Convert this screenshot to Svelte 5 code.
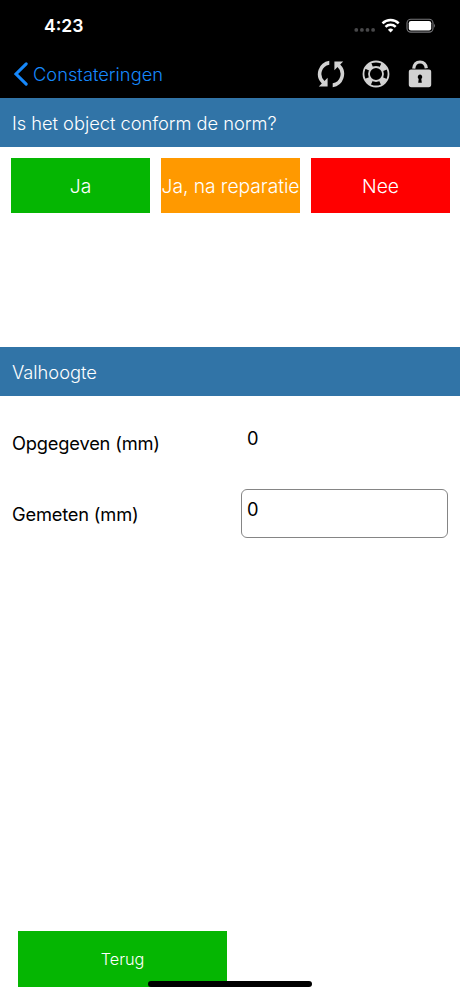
<script>
	let gemeten = $state('0');

	const keuzes = [
		{ label: 'Ja', kleur: 'groen' },
		{ label: 'Ja, na reparatie', kleur: 'oranje' },
		{ label: 'Nee', kleur: 'rood' }
	];
</script>

<div class="scherm">
	<header>
		<div class="status">
			<span class="tijd">4:23</span>
			<svg width="84" height="18" viewBox="0 0 84 18">
				<g fill="#48484a">
					<circle cx="5.3" cy="12.9" r="1.9" />
					<circle cx="10.9" cy="12.9" r="1.9" />
					<circle cx="16.5" cy="12.9" r="1.9" />
					<circle cx="22.1" cy="12.9" r="1.9" />
				</g>
				<g fill="none" stroke="#fff" stroke-width="2.5">
					<path d="M31.5 6.4a11.6 11.6 0 0 1 16.2 0" />
					<path d="M34.5 9.9a7.3 7.3 0 0 1 10.2 0" />
				</g>
				<path d="M36.9 12.7a4 4 0 0 1 5.4 0L39.6 15.5z" fill="#fff" />
				<rect x="56" y="2.3" width="26" height="12.8" rx="3.8" fill="none" stroke="#77777a" stroke-width="1.1" />
				<rect x="57.8" y="4" width="22.4" height="9.4" rx="2.2" fill="#fff" />
				<path d="M83 6.7q1.8 2 0 4z" fill="#77777a" />
			</svg>
		</div>
		<nav>
			<button class="terug-link">
				<svg width="16" height="26" viewBox="0 0 16 26">
					<path d="M13.2 2.9L3 13l10.2 10.1" fill="none" stroke="#1688fb" stroke-width="3.1" stroke-linecap="round" />
				</svg>
				<span>Constateringen</span>
			</button>
			<div class="iconen">
				<svg width="28" height="28" viewBox="0 0 28 28">
					<g fill="#d2d2d2">
						<path d="M12.3.8V4.7A9.4 9.4 0 0 0 7.5 20.9L10.6 17.8V26.6H1.8L4.8 23.5A13.4 13.4 0 0 1 12.3.8z" />
						<path d="M12.3.8V4.7A9.4 9.4 0 0 0 7.5 20.9L10.6 17.8V26.6H1.8L4.8 23.5A13.4 13.4 0 0 1 12.3.8z" transform="rotate(180 14 14)" />
					</g>
				</svg>
				<svg width="28" height="28" viewBox="0 0 28 28">
					<g fill="none" stroke="#d2d2d2">
						<circle cx="14" cy="14" r="12.5" stroke-width="1.8" />
						<circle cx="14" cy="14" r="7" stroke-width="1.8" />
						<circle cx="14" cy="14" r="9.8" stroke-width="5.4" stroke-dasharray="6.8 8.594" stroke-dashoffset="-4.3" />
					</g>
				</svg>
				<svg width="28" height="28" viewBox="0 0 28 28">
					<path d="M7.7 8.6C8.2 4 10.8 2 14 2s5.8 2 6.3 6.2" fill="none" stroke="#d2d2d2" stroke-width="3.2" />
					<path fill="#d2d2d2" fill-rule="evenodd" d="M5 9.4h18a2.2 2.2 0 0 1 2.2 2.2v13a2.6 2.6 0 0 1-2.6 2.6H5.4a2.6 2.6 0 0 1-2.6-2.6v-13A2.2 2.2 0 0 1 5 9.4zM14 14.6a2.4 2.4 0 0 0-1.3 4.3l-.5 3.9h3.6l-.5-3.9A2.4 2.4 0 0 0 14 14.6z" />
				</svg>
			</div>
		</nav>
	</header>

	<main>
		<h2>Is het object conform de norm?</h2>
		<div class="keuzes">
			{#each keuzes as keuze}
				<button class={keuze.kleur}>{keuze.label}</button>
			{/each}
		</div>

		<h2>Valhoogte</h2>
		<div class="veld">
			<span class="label">Opgegeven (mm)</span>
			<span class="waarde">0</span>
		</div>
		<div class="veld">
			<label class="label" for="gemeten">Gemeten (mm)</label>
			<input id="gemeten" class="waarde" bind:value={gemeten} />
		</div>
	</main>

	<footer>
		<button class="groen terug">Terug</button>
	</footer>
	<div class="home"></div>
</div>

<style>
	:global(body) {
		margin: 0;
		background: #fff;
	}

	.scherm {
		position: relative;
		display: flex;
		flex-direction: column;
		box-sizing: border-box;
		width: 460px;
		height: 996px;
		overflow: hidden;
		font-family: Inter, "Liberation Sans", sans-serif;
		font-size: 18.3px;
		letter-spacing: -0.19px;
		color: #000;
	}

	button {
		border: none;
		padding: 0;
		font: inherit;
		font-weight: 350;
		letter-spacing: -0.06px;
		color: #fff;
		white-space: nowrap;
		cursor: pointer;
	}

	svg {
		display: block;
	}

	header {
		height: 98px;
		background: #000;
	}

	.status {
		display: flex;
		justify-content: space-between;
		align-items: center;
		height: 49px;
		padding: 2px 25px 0 44px;
		box-sizing: border-box;
	}

	.tijd {
		color: #fff;
		font-size: 17.6px;
		font-weight: 600;
		line-height: 22px;
		letter-spacing: 0;
	}

	nav {
		display: flex;
		justify-content: space-between;
		align-items: center;
		height: 49px;
		padding: 0 26px 0 13px;
	}

	.terug-link {
		display: flex;
		align-items: center;
		gap: 4px;
		background: none;
		color: #1688fb;
		letter-spacing: 0;
	}

	.iconen {
		display: flex;
		gap: 16.5px;
	}

	h2 {
		display: flex;
		align-items: center;
		height: 49px;
		margin: 0;
		padding: 0 12px;
		background: #3174a7;
		color: #fff;
		font-size: inherit;
		font-weight: 350;
		letter-spacing: -0.03px;
	}

	.keuzes {
		display: grid;
		grid-template-columns: repeat(3, 1fr);
		gap: 11px;
		height: 200px;
		padding: 11px 10px 0 11px;
		box-sizing: border-box;
	}

	.keuzes button {
		height: 55px;
		min-width: 0;
		font-size: 19.3px;
	}

	.groen {
		background: #05b602;
	}

	.oranje {
		background: #ff9900;
	}

	.rood {
		background: #ff0000;
	}

	.veld {
		display: flex;
		align-items: center;
		height: 49px;
		margin: 22px 12px 0;
	}

	.label {
		flex: none;
		width: 229px;
	}

	.waarde {
		flex: 1;
		min-width: 0;
		box-sizing: border-box;
		height: 49px;
		border: 1px solid transparent;
		border-radius: 6px;
		padding: 0 5px 8px;
		font: inherit;
		line-height: 39px;
		color: #000;
	}

	input.waarde {
		border-color: #858585;
		padding-bottom: 9px;
		background: #fff;
		outline: none;
	}

	footer {
		margin-top: auto;
		padding: 0 18px 9px;
	}

	.terug {
		width: 209px;
		height: 56px;
		font-size: 16.3px;
	}

	.home {
		position: absolute;
		left: 148px;
		bottom: 9px;
		width: 164px;
		height: 6px;
		border-radius: 3px;
		background: #000;
	}
</style>
